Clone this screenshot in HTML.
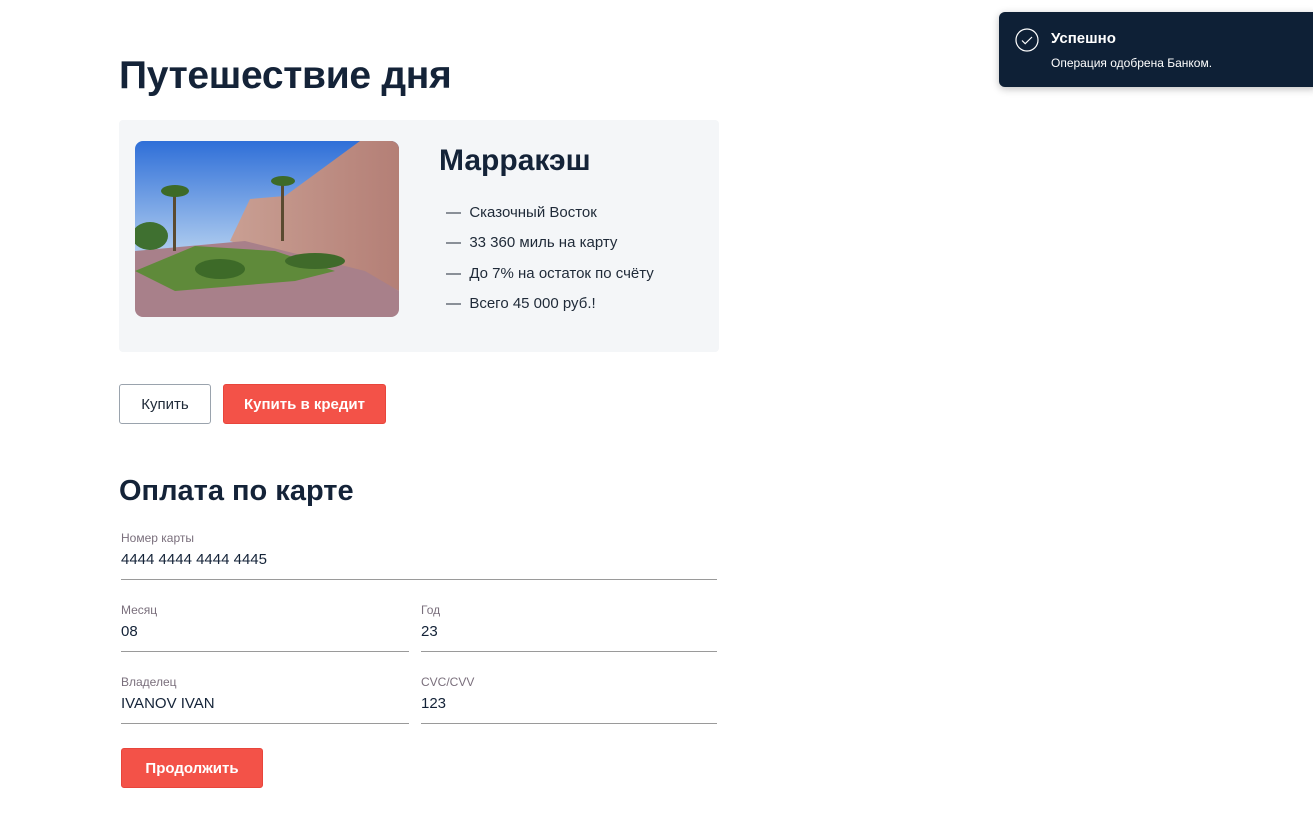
<!DOCTYPE html>
<html><head><meta charset="utf-8"><style>
*{margin:0;padding:0;box-sizing:border-box}
body{width:1313px;height:823px;background:#fff;font-family:"Liberation Sans","DejaVu Sans",sans-serif;color:#13233a;position:relative;overflow:hidden}
.a{position:absolute}
h1{position:absolute;left:119px;top:54px;font-size:39px;font-weight:700;color:#142338;letter-spacing:-0.3px}
.card{left:119px;top:120px;width:600px;height:232px;background:#f4f6f8;border-radius:4px}
.img{left:135px;top:141px;width:264px;height:176px;border-radius:8px;overflow:hidden}
.li{left:446px;font-size:15px;color:#1f2a38}
.btn{height:40px;border-radius:3px;font-size:15px;display:flex;align-items:center;justify-content:center}
.lab{font-size:12px;color:#7a6f7c}
.val{font-size:15px;color:#142338}
.line{height:1px;background:#9a9a9a}
</style></head><body>
<h1>Путешествие дня</h1>
<div class="a card"></div>
<div class="a img"><svg width="264" height="176" viewBox="0 0 264 176">
<defs><linearGradient id="s" x1="0" y1="0" x2="0" y2="1"><stop offset="0" stop-color="#2f6fd8"/><stop offset="0.6" stop-color="#a9c8ee"/><stop offset="1" stop-color="#e6eef6"/></linearGradient>
<linearGradient id="w" x1="0" y1="0" x2="1" y2="0"><stop offset="0" stop-color="#c99f93"/><stop offset="1" stop-color="#b47f76"/></linearGradient></defs>
<rect width="264" height="176" fill="url(#s)"/>
<polygon points="95,100 115,58 150,55 225,0 264,0 264,150 235,135 110,105" fill="url(#w)"/>
<polygon points="0,110 110,100 230,130 264,150 264,176 0,176" fill="#a8808a"/>
<polygon points="0,130 60,105 140,110 200,130 160,140 40,150" fill="#5f8a3a"/>
<ellipse cx="85" cy="128" rx="25" ry="10" fill="#3d6a28"/>
<ellipse cx="180" cy="120" rx="30" ry="8" fill="#3f6a2a"/>
<rect x="38" y="50" width="3" height="60" fill="#5a4a30"/><ellipse cx="40" cy="50" rx="14" ry="6" fill="#3d6a28"/>
<rect x="146" y="40" width="3" height="60" fill="#5a4a30"/><ellipse cx="148" cy="40" rx="12" ry="5" fill="#3d6a28"/>
<ellipse cx="15" cy="95" rx="18" ry="14" fill="#3f7030"/>
</svg></div>
<div class="a" style="left:439px;top:144px;font-size:30px;font-weight:700;color:#142338">Марракэш</div>
<div class="a li" style="top:204px">—&nbsp;&nbsp;Сказочный Восток</div>
<div class="a li" style="top:234px">—&nbsp;&nbsp;33 360 миль на карту</div>
<div class="a li" style="top:265px">—&nbsp;&nbsp;До 7% на остаток по счёту</div>
<div class="a li" style="top:295px">—&nbsp;&nbsp;Всего 45 000 руб.!</div>
<div class="a btn" style="left:119px;top:384px;width:92px;border:1px solid #9aa3ad;color:#1f2a38">Купить</div>
<div class="a btn" style="left:223px;top:384px;width:163px;background:#f35248;color:#fff;font-weight:700;border:1px solid #e8453b">Купить в кредит</div>
<div class="a" style="left:119px;top:475px;font-size:29px;font-weight:700;color:#142338">Оплата по карте</div>
<div class="a lab" style="left:121px;top:531px">Номер карты</div>
<div class="a val" style="left:121px;top:551px">4444 4444 4444 4445</div>
<div class="a line" style="left:121px;top:579px;width:596px"></div>
<div class="a lab" style="left:121px;top:603px">Месяц</div>
<div class="a val" style="left:121px;top:623px">08</div>
<div class="a line" style="left:121px;top:651px;width:288px"></div>
<div class="a lab" style="left:421px;top:603px">Год</div>
<div class="a val" style="left:421px;top:623px">23</div>
<div class="a line" style="left:421px;top:651px;width:296px"></div>
<div class="a lab" style="left:121px;top:675px">Владелец</div>
<div class="a val" style="left:121px;top:695px">IVANOV IVAN</div>
<div class="a line" style="left:121px;top:723px;width:288px"></div>
<div class="a lab" style="left:421px;top:675px">CVC/CVV</div>
<div class="a val" style="left:421px;top:695px">123</div>
<div class="a line" style="left:421px;top:723px;width:296px"></div>
<div class="a btn" style="left:121px;top:748px;width:142px;background:#f35248;color:#fff;font-weight:700;border:1px solid #e8453b">Продолжить</div>
<div class="a" style="left:999px;top:12px;width:320px;height:75px;background:#0e2036;border-radius:6px;box-shadow:0 2px 8px rgba(0,0,0,.25)"></div>
<svg class="a" style="left:1015px;top:28px" width="24" height="24" viewBox="0 0 24 24"><circle cx="12" cy="12" r="11" fill="none" stroke="#fff" stroke-width="1.2"/><path d="M7 12.5l3.2 3.2L17 9" fill="none" stroke="#fff" stroke-width="1.2"/></svg>
<div class="a" style="left:1051px;top:30px;font-size:15px;font-weight:700;color:#fff">Успешно</div>
<div class="a" style="left:1051px;top:56px;font-size:12px;color:#fff">Операция одобрена Банком.</div>
</body></html>
